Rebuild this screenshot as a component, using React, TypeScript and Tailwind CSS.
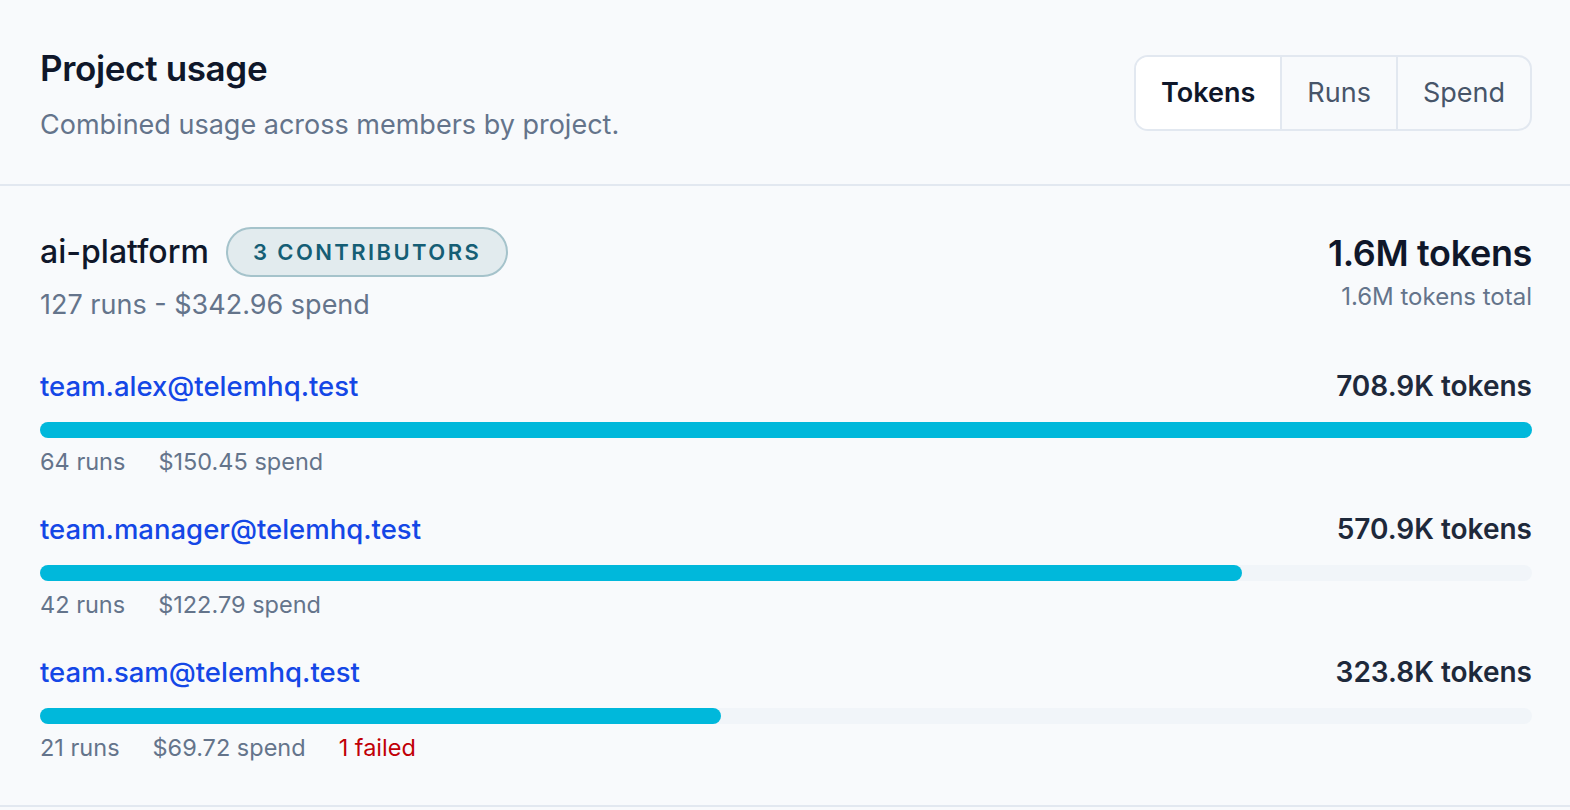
import { useState } from "react";

type Member = {
  email: string;
  tokens: number;
  runs: number;
  spend: string;
  failed?: number;
};

const members: Member[] = [
  { email: "team.alex@telemhq.test", tokens: 708.9, runs: 64, spend: "$150.45" },
  { email: "team.manager@telemhq.test", tokens: 570.9, runs: 42, spend: "$122.79" },
  { email: "team.sam@telemhq.test", tokens: 323.8, runs: 21, spend: "$69.72", failed: 1 },
];

const tabs = ["Tokens", "Runs", "Spend"];

export default function App() {
  const [tab, setTab] = useState("Tokens");
  const max = Math.max(...members.map((m) => m.tokens));

  return (
    <div className="min-h-screen bg-[#f8fafc] font-['Inter','Liberation_Sans',sans-serif]">
      {/* header */}
      <div className="flex items-start justify-between border-b-2 border-[#e2e8f0] pl-10 pr-[38px] pt-[48px] pb-[41px]">
        <div>
          <h2 className="text-[35px] font-semibold leading-10 tracking-[-0.01em] text-[#0f172a]">Project usage</h2>
          <p className="mt-[19px] text-[27px] leading-9 text-[#64748b]">
            Combined usage across members by project.
          </p>
        </div>
        <div className="mt-[7px] flex overflow-hidden rounded-[14px] border-2 border-[#e2e8f0]">
          {tabs.map((t, i) => (
            <button
              key={t}
              onClick={() => setTab(t)}
              className={`px-[25px] py-[18px] text-[27px] leading-9 ${i > 0 ? "border-l-2 border-[#e2e8f0]" : ""} ${
                tab === t ? "bg-white font-semibold text-[#0f172a]" : "text-[#475569]"
              }`}
            >
              {t}
            </button>
          ))}
        </div>
      </div>

      {/* project */}
      <div className="border-b-2 border-[#e2e8f0] pl-10 pr-[38px] pt-[41px] pb-[43px]">
        <div className="flex items-start justify-between">
          <div>
            <div className="flex items-center gap-[17px]">
              <span className="text-[32px] font-medium leading-10 text-[#0f172a]">ai-platform</span>
              <span className="rounded-full border-2 border-[#a5c3cb] bg-[#e2ebee] px-[25px] py-[9px] text-[22px] font-semibold uppercase leading-7 tracking-[0.11em] text-[#155e75]">
                3 contributors
              </span>
            </div>
            <p className="mt-[10px] text-[27px] leading-9 text-[#64748b]">127 runs - $342.96 spend</p>
          </div>
          <div className="pt-[6px] text-right">
            <div className="text-[36px] font-semibold leading-10 tracking-[-0.01em] text-[#0f172a]">1.6M tokens</div>
            <div className="mt-[10px] text-[24px] leading-7 text-[#64748b]">1.6M tokens total</div>
          </div>
        </div>

        <div className="mt-[45px] flex flex-col gap-[35px]">
          {members.map((m) => (
            <div key={m.email}>
              <div className="flex items-center justify-between">
                <a className="text-[27.5px] font-medium leading-9 text-[#1447e6]">{m.email}</a>
                <span className="text-[28px] font-semibold leading-9 text-[#1e293b]">{m.tokens}K tokens</span>
              </div>
              <div className="mt-[18px] h-4 w-full rounded-full bg-[#f1f5f9]">
                <div
                  className="h-4 rounded-full bg-[#00b8db]"
                  style={{ width: `${(m.tokens / max) * 100}%` }}
                />
              </div>
              <div className="mt-[10px] flex gap-[33px] text-[23.5px] leading-7 text-[#64748b]">
                <span>{m.runs} runs</span>
                <span>{m.spend} spend</span>
                {m.failed ? <span className="text-[#c10007]">{m.failed} failed</span> : null}
              </div>
            </div>
          ))}
        </div>
      </div>
    </div>
  );
}
